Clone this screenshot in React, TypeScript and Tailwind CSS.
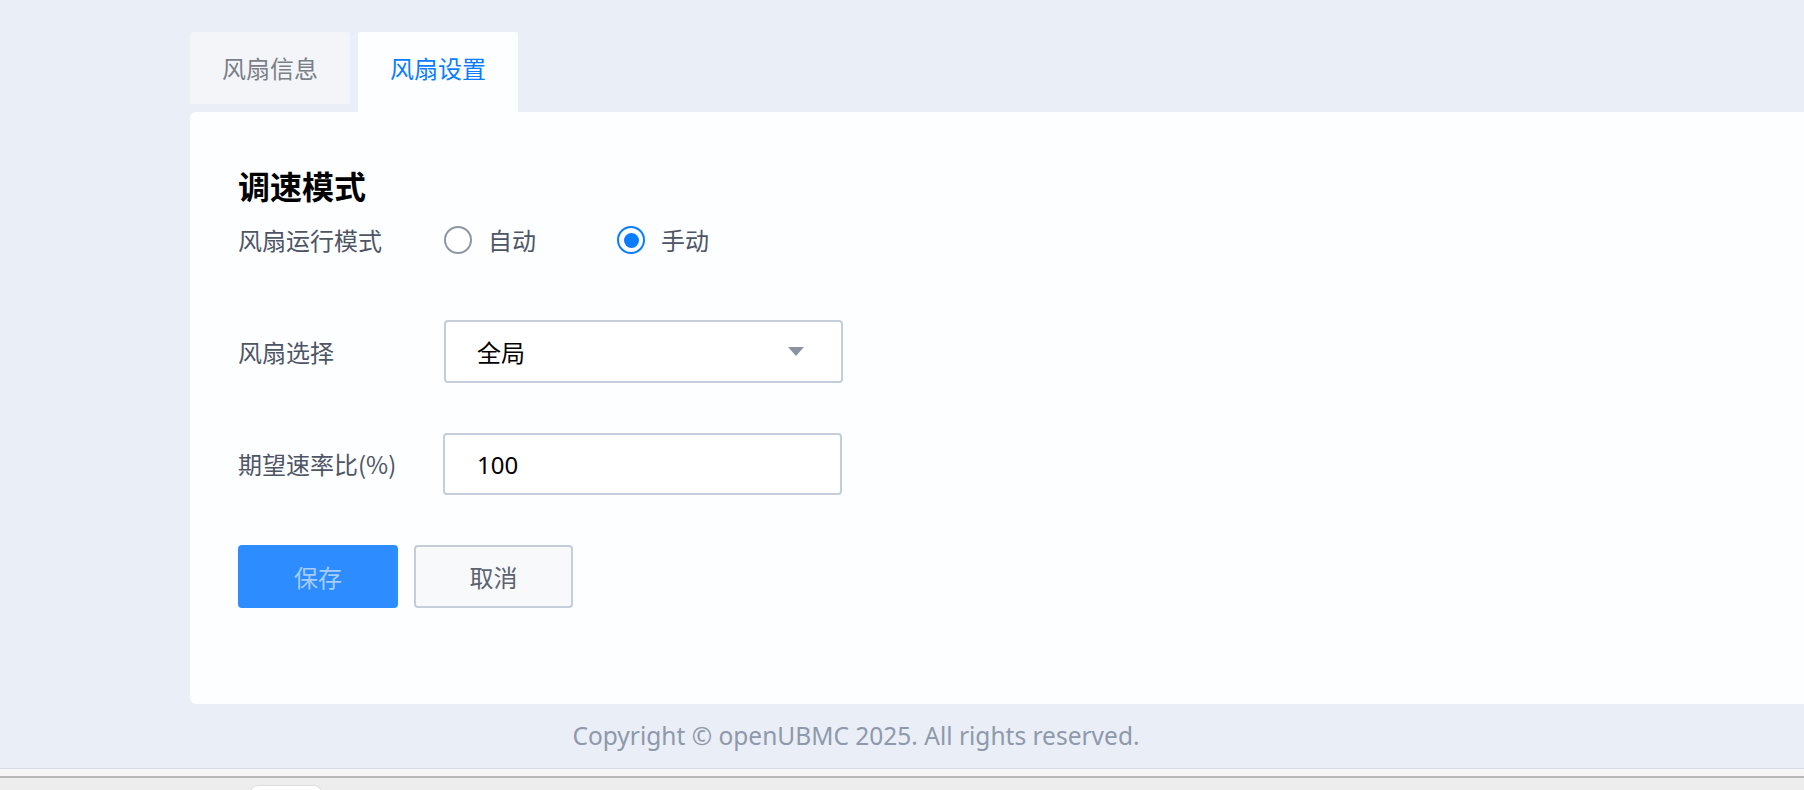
import React, { useState } from 'react';

const cjk = { fontFamily: '"Noto Sans CJK SC", "Noto Sans", sans-serif' };

const Radio = ({ checked, label, onClick }: { checked: boolean; label: string; onClick: () => void }) => (
  <button type="button" onClick={onClick} className="flex items-center mr-[81px]">
    <span
      className={`w-[28px] h-[28px] rounded-full flex items-center justify-center bg-white ${
        checked ? 'border-2 border-[#0a7cff]' : 'border-2 border-[#8f96a3]'
      }`}
    >
      {checked && <span className="w-[15px] h-[15px] rounded-full bg-[#0a7cff]" />}
    </span>
    <span className="ml-[16px] text-[24px] text-[#4e5565] leading-[36px]">{label}</span>
  </button>
);

const App = () => {
  const [tab, setTab] = useState(1);
  const [mode, setMode] = useState<'auto' | 'manual'>('manual');
  const [ratio, setRatio] = useState('100');

  return (
    <div className="w-[1804px] h-[790px] overflow-hidden bg-[#eaeef6] flex flex-col" style={cjk}>
      <div className="pl-[190px] pt-[32px] shrink-0">
        <div className="flex gap-[8px] items-start">
          {['风扇信息', '风扇设置'].map((t, i) => (
            <button
              key={t}
              onClick={() => setTab(i)}
              className={`w-[160px] rounded-t-[3px] text-[24px] flex items-center justify-center ${
                tab === i ? 'h-[80px] pb-[8px] bg-[#fdfeff] text-[#0a7cff]' : 'h-[72px] bg-[#f3f5f9] text-[#7a7f88]'
              }`}
            >
              {t}
            </button>
          ))}
        </div>

        <div className="bg-[#fdfeff] rounded-tl-[6px] rounded-bl-[6px] h-[592px] pl-[48px] pt-[51px]">
          <h2 className="text-[32px] font-bold text-black leading-[44px]">调速模式</h2>

          <div className="flex items-center mt-[11px] h-[44px]">
            <span className="w-[206px] text-[24px] text-[#4e5565]">风扇运行模式</span>
            <Radio checked={mode === 'auto'} label="自动" onClick={() => setMode('auto')} />
            <Radio checked={mode === 'manual'} label="手动" onClick={() => setMode('manual')} />
          </div>

          <div className="flex items-center mt-[58px]">
            <span className="w-[206px] text-[24px] text-[#4e5565]">风扇选择</span>
            <div className="w-[399px] h-[63px] border-2 border-[#c5cddb] rounded-[4px] bg-white flex items-center justify-between pl-[31px] pr-[37px]">
              <span className="text-[24px] text-black">全局</span>
              <svg width="16" height="9" viewBox="0 0 16 9">
                <path d="M0 0 L16 0 L8 9 Z" fill="#8b93a1" />
              </svg>
            </div>
          </div>

          <div className="flex items-center mt-[50px]">
            <span className="w-[205px] text-[24px] text-[#4e5565]">期望速率比(%)</span>
            <input
              value={ratio}
              onChange={(e) => setRatio(e.target.value)}
              className="w-[399px] h-[62px] border-2 border-[#c5cddb] rounded-[4px] bg-white pl-[32px] text-[24px] text-black outline-none"
              style={{ fontFamily: '"Noto Sans", sans-serif' }}
            />
          </div>

          <div className="flex gap-[16px] mt-[50px]">
            <button className="w-[160px] h-[63px] rounded-[4px] bg-[#2d8cff] text-[24px] text-[#a6cdff]">保存</button>
            <button className="w-[159px] h-[63px] rounded-[4px] bg-[#f8f9fb] border-2 border-[#c5cddb] text-[24px] text-[#5b6270]">
              取消
            </button>
          </div>
        </div>
      </div>

      <div className="w-[1712px] h-[64px] shrink-0 flex items-center justify-center">
        <span className="text-[24.5px] text-[#8e99ab]" style={{ fontFamily: '"Noto Sans", sans-serif' }}>
          Copyright © openUBMC 2025. All rights reserved.
        </span>
      </div>

      <div className="flex-1 flex flex-col overflow-hidden">
        <div className="h-[1px] shrink-0 bg-[#d8dbe0]" />
        <div className="h-[7px] shrink-0 bg-[#f6f6f6]" />
        <div className="h-[2px] shrink-0 bg-[#b7b7b7]" />
        <div className="flex-1 bg-[#ededed] pl-[250px] pt-[7px]">
          <div className="w-[72px] h-[20px] bg-white border border-[#dddddd] rounded-t-[8px]" />
        </div>
      </div>
    </div>
  );
};

export default App;
